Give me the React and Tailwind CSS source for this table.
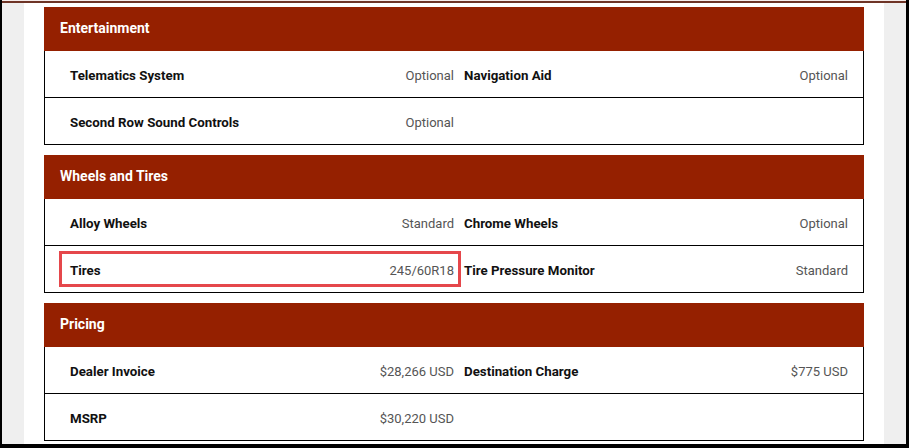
import React from "react";

const sections = [
  {
    title: "Entertainment",
    rows: [
      [["Telematics System", "Optional"], ["Navigation Aid", "Optional"]],
      [["Second Row Sound Controls", "Optional"], null],
    ],
  },
  {
    title: "Wheels and Tires",
    rows: [
      [["Alloy Wheels", "Standard"], ["Chrome Wheels", "Optional"]],
      [["Tires", "245/60R18"], ["Tire Pressure Monitor", "Standard"]],
    ],
    highlight: 1,
  },
  {
    title: "Pricing",
    rows: [
      [["Dealer Invoice", "$28,266 USD"], ["Destination Charge", "$775 USD"]],
      [["MSRP", "$30,220 USD"], null],
    ],
  },
];

function Cell({ item }) {
  if (!item) return <div />;
  return (
    <div className="flex items-center justify-between">
      <span className="font-bold text-[13.3px] text-[#111]">{item[0]}</span>
      <span className="text-[13px] text-[#555]">{item[1]}</span>
    </div>
  );
}

function Section({ s }) {
  return (
    <div className="w-[820px]">
      <div className="h-[44px] bg-[#952000] flex items-center px-[16px] pb-[1px]">
        <span className="text-white font-bold text-[14px]">{s.title}</span>
      </div>
      <div className="border-x border-black">
        {s.rows.map((r, i) => (
          <div
            key={i}
            className="relative h-[47px] border-b border-black grid grid-cols-2 gap-[10px] items-center pl-[25px] pr-[15px] pt-[3px]"
          >
            <Cell item={r[0]} />
            <Cell item={r[1]} />
            {s.highlight === i && (
              <span className="absolute left-[14px] top-[5px] w-[402px] h-[36px] border-[3px] border-[#e5474b]" />
            )}
          </div>
        ))}
      </div>
    </div>
  );
}

export default function App() {
  return (
    <div
      className="w-[909px] h-[448px] overflow-hidden bg-black"
      style={{ fontFamily: "Roboto, 'Liberation Sans', sans-serif" }}
    >
      <div className="h-[444px] flex flex-col border-l-2 border-r-[3px] border-black">
        <div className="h-[1px] bg-[#f6ecea]" />
        <div className="h-[2px] bg-[#6e3426]" />
        <div className="flex flex-1">
          <div className="w-[22px] bg-[#efefef]" />
          <div className="w-[860px] bg-white px-[20px] pt-[4px] flex flex-col gap-[10px]">
            {sections.map((s) => (
              <Section key={s.title} s={s} />
            ))}
          </div>
          <div className="w-[22px] bg-[#efefef]" />
        </div>
      </div>
    </div>
  );
}
